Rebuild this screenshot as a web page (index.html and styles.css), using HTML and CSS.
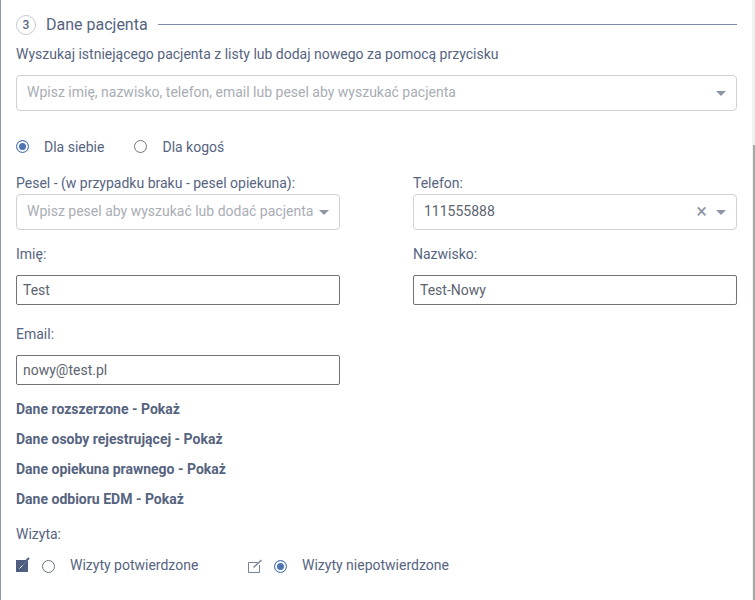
FILE: index.html
```html
<!DOCTYPE html>
<html lang="pl">
<head>
  <meta charset="UTF-8">
  <title>Dane pacjenta</title>
  <link rel="stylesheet" href="styles.css">
</head>
<body>

  <div class="page">
    <main class="panel">

      <div class="section-title">
        <span class="step">3</span>
        <h2>Dane pacjenta</h2>
        <span class="title-line"></span>
      </div>

      <p class="hint">Wyszukaj istniejącego pacjenta z listy lub dodaj nowego za pomocą przycisku</p>

      <div class="select search-select">
        <span class="placeholder">Wpisz imię, nazwisko, telefon, email lub pesel aby wyszukać pacjenta</span>
        <span class="caret"></span>
      </div>

      <div class="radio-row who-row">
        <span class="radio checked"></span>
        <span class="radio-label">Dla siebie</span>
        <span class="radio second"></span>
        <span class="radio-label">Dla kogoś</span>
      </div>

      <div class="form-grid">
        <div class="field select-field">
          <label>Pesel - (w przypadku braku - pesel opiekuna):</label>
          <div class="select">
            <span class="placeholder">Wpisz pesel aby wyszukać lub dodać pacjenta</span>
            <span class="caret"></span>
          </div>
        </div>
        <div class="field select-field">
          <label>Telefon:</label>
          <div class="select">
            <span class="value">111555888</span>
            <span class="clear">×</span>
            <span class="caret"></span>
          </div>
        </div>
        <div class="field">
          <label>Imię:</label>
          <div class="input">Test</div>
        </div>
        <div class="field">
          <label>Nazwisko:</label>
          <div class="input">Test-Nowy</div>
        </div>
        <div class="field">
          <label>Email:</label>
          <div class="input">nowy@test.pl</div>
        </div>
      </div>

      <div class="toggles">
        <a class="toggle">Dane rozszerzone - Pokaż</a>
        <a class="toggle">Dane osoby rejestrującej - Pokaż</a>
        <a class="toggle">Dane opiekuna prawnego - Pokaż</a>
        <a class="toggle">Dane odbioru EDM - Pokaż</a>
      </div>

      <div class="visit-label">Wizyta:</div>

      <div class="visit-row">
        <div class="visit-option">
          <svg class="visit-icon" width="14" height="16" viewBox="0 0 14 16">
            <path fill="#4f5f80" d="M0 3h12v12H0z"/>
            <path stroke="#fff" stroke-width="1" d="M3.5 11.5 13 2"/>
            <path stroke="#4f5f80" stroke-width="2" d="M6 8l7-7"/>
          </svg>
          <span class="radio"></span>
          <span class="radio-label">Wizyty potwierdzone</span>
        </div>
        <div class="visit-option">
          <svg class="visit-icon" width="14" height="16" viewBox="0 0 14 16" fill="none" stroke="#75829b">
            <path d="M9.5 5.5H.5v10h11V8"/>
            <path stroke-width="1.4" d="M5.5 10.5 13.5 3"/>
          </svg>
          <span class="radio checked"></span>
          <span class="radio-label">Wizyty niepotwierdzone</span>
        </div>
      </div>

    </main>

    <div class="scrollbar"><div class="thumb"></div></div>
  </div>

</body>
</html>
```

FILE: styles.css
```css
* {
  box-sizing: border-box;
}

html, body {
  height: 100%;
}

body {
  font-family: Roboto, "Liberation Sans", sans-serif;
  font-size: 14px;
  line-height: 20px;
  color: #56647f;
  background: white;
  margin: 0;
  overflow: hidden;
}

.page {
  display: flex;
  height: 600px;
  border-left: 1px solid #8d97ad;
}

.panel {
  flex: 1;
  padding: 15px 15px 0 15px;
}

.scrollbar {
  width: 3px;
  background: #f1f1f1;
  padding-top: 145px;
}

.thumb {
  height: 100%;
  margin-left: 1px;
  background: #a8a8a8;
}

/* section header */
.section-title {
  display: flex;
  align-items: center;
  height: 20px;
}

.step {
  width: 20px;
  height: 20px;
  border: 1px solid #c5cad3;
  border-radius: 50%;
  font-size: 12px;
  font-weight: 500;
  line-height: 18px;
  text-align: center;
}

.section-title h2 {
  margin: 0 0 0 10px;
  font-size: 16px;
  font-weight: 400;
}

.title-line {
  flex: 1;
  height: 1px;
  margin: 0 0 1px 10px;
  background: #7d8aa3;
}

.hint {
  margin: 9px 0 0 0;
}

/* selects */
.select {
  display: flex;
  align-items: center;
  height: 36px;
  padding: 0 10px 2px 10px;
  border: 1px solid #ced1d6;
  border-radius: 4px;
  background: white;
}

.search-select {
  margin-top: 11px;
}

.placeholder {
  flex: 1;
  color: #a9adb5;
  white-space: nowrap;
}

.value {
  flex: 1;
  color: #5c6470;
}

.clear {
  margin-right: 4px;
  color: #8b93a3;
  font-size: 20px;
}

.caret {
  width: 0;
  height: 0;
  margin: 2px 0 0 5px;
  border-left: 5px solid transparent;
  border-right: 5px solid transparent;
  border-top: 5px solid #8d95a6;
}

/* radios */
.radio-row {
  display: flex;
  align-items: center;
}

.who-row {
  margin-top: 26px;
}

.who-row .radio {
  margin-bottom: 2px;
}

.radio {
  flex: none;
  width: 13px;
  height: 13px;
  border: 1px solid #6d7480;
  border-radius: 50%;
  background: white;
}

.radio.checked {
  border-color: #4d75b3;
  background: #4d75b3;
  box-shadow: inset 0 0 0 2px white;
}

.who-row .radio-label {
  margin-left: 15px;
}

.who-row .radio.second {
  margin-left: 30px;
}

/* form */
.form-grid {
  display: grid;
  grid-template-columns: 324px 324px;
  column-gap: 73px;
  margin-top: 16px;
}

.field {
  display: block;
}

.field label {
  display: block;
  height: 21px;
}

.field .select {
  margin-bottom: 14px;
}

.input {
  height: 30px;
  margin: 10px 0 19px 0;
  padding: 0 6px;
  border: 1px solid #6f7279;
  border-radius: 2px;
  line-height: 28px;
  color: #5c6470;
}

.toggles {
  display: flex;
  flex-direction: column;
  gap: 10px;
  margin-top: -5px;
}

.toggle {
  font-weight: 700;
  color: #56647f;
}

.visit-label {
  margin-top: 15px;
}

.visit-row {
  display: flex;
  margin-top: 11px;
}

.visit-option {
  display: flex;
  align-items: center;
  width: 232px;
}

.visit-icon {
  margin-right: 12px;
}

.visit-option .radio {
  margin-top: 2px;
}

.visit-option .radio-label {
  margin-left: 15px;
}
```
